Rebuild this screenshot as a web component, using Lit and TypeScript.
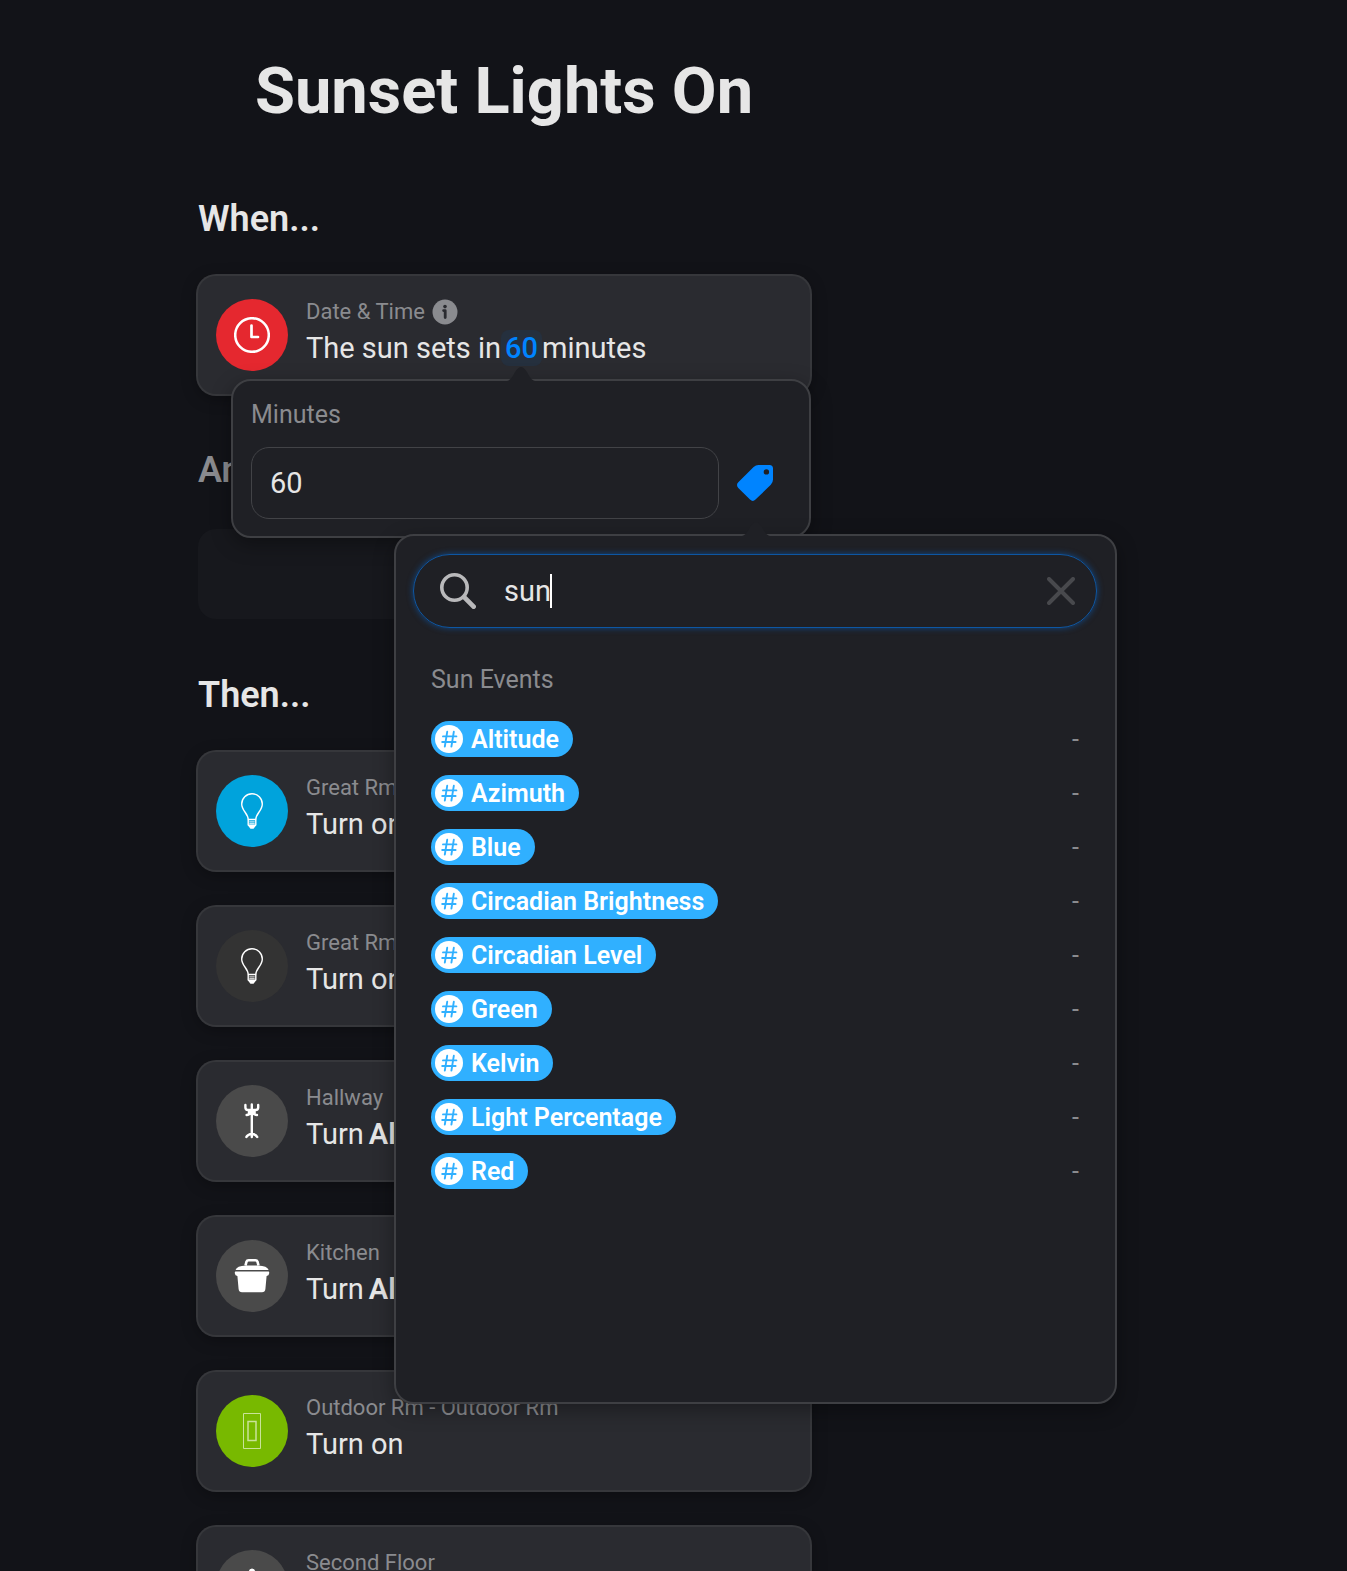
import { LitElement, html, css, svg } from "lit";
import { customElement, property } from "lit/decorators.js";

const icons: Record<string, unknown> = {
  clock: svg`<svg viewBox="0 0 36 36" fill="none" stroke="#fff" stroke-linecap="round" stroke-linejoin="round"><circle cx="18" cy="18" r="16.8" stroke-width="2.5"/><path d="M17.5 8.5V20H24" stroke-width="2.7"/></svg>`,
  bulb: svg`<svg viewBox="0 0 36 36" fill="none" stroke="#fff" stroke-width="1.4" stroke-linejoin="round"><path d="M14.2 26.5C14.2 20.5 7.7 17.8 7.7 11A10.3 10.3 0 0 1 28.3 11C28.3 17.8 21.8 20.5 21.8 26.5Z"/><path d="M14.2 26.5V32L16 33.5H20L21.8 32V26.5"/><path d="M15.3 28.8H20.7M15.3 30.6H20.7" stroke-width="1.2" opacity=".75"/><path d="M15 32.3H21L19.4 35H16.6Z" fill="#fff"/></svg>`,
  rack: svg`<svg viewBox="0 0 36 36" fill="none" stroke="#fff" stroke-width="2.4" stroke-linecap="round" stroke-linejoin="round"><path d="M17.8 1.5V34M11.4 2V4.6Q11.4 7 14 7H21.6Q24.2 7 24.2 4.6V2M12.6 12Q15.5 12 17.8 9Q20 12 23 12M15 8.5H20.6V10.5H15ZM12.4 34Q13.2 32 17.8 30.5Q22.4 32 23.2 34"/></svg>`,
  pot: svg`<svg viewBox="0 0 36 36" fill="#fff"><path d="M11.5 7.5 12.5 3.7Q13 2.2 14.6 2.2H21.4Q23 2.2 23.5 3.7L24.5 7.5" fill="none" stroke="#fff" stroke-width="2.6"/><path d="M1.6 12Q2.6 8 12 7.6H24Q33.4 8 34.6 12Z"/><path d="M1.5 13.6H34.5Q35.4 13.8 35.2 15.2Q35 17.6 32.6 18L31.4 31Q31 34.3 28 34.3H8Q5 34.3 4.6 31L3.4 18Q1 17.6.8 15.2Q.6 13.8 1.5 13.6Z"/></svg>`,
  outlet: svg`<svg viewBox="0 0 36 36" fill="none" stroke="#fff" opacity=".6"><path d="M9.5.5H26.5V35.5H9.5Z"/><path d="M14 8.5H22V27.5H14Z" stroke-width="1.5"/></svg>`,
  home: svg`<svg viewBox="0 0 36 36" fill="#fff"><path d="M18 .5a3.3 3.3 0 0 1 3.2 3L34 16H29V35H7V16H2L14.8 3.5A3.3 3.3 0 0 1 18 .5Z"/></svg>`,
  info: svg`<svg viewBox="0 0 26 26"><circle cx="13" cy="13" r="12.5" fill="#8a8b8f"/><circle cx="13" cy="7.6" r="1.8" fill="#2a2b30"/><path d="M11.6 11.6H13.2V18.6" stroke="#2a2b30" stroke-width="2.8" stroke-linecap="round" stroke-linejoin="round" fill="none"/></svg>`,
  tag: svg`<svg viewBox="0 0 36 36"><path fill="#0084ff" fill-rule="evenodd" d="M21.5 0H32.5Q36 0 36 3.5V14.5Q36 17.5 33.8 19.8L18.5 34.6Q15.8 37.3 13 34.6L1.3 22.9Q-1.3 20 1.3 17.3L16.6 2.1Q18.8 0 21.5 0ZM29.4 4.2A2.7 2.7 0 1 0 29.4 9.6A2.7 2.7 0 1 0 29.4 4.2Z"/></svg>`,
  search: svg`<svg viewBox="0 0 36 36" fill="none" stroke="#b9b9bb" stroke-linecap="round"><circle cx="14.5" cy="14.5" r="12.7" stroke-width="3.6"/><path d="M24.4 24.4 33.6 33.6" stroke-width="4.8"/></svg>`,
  close: svg`<svg viewBox="0 0 28 28" fill="none" stroke="#48494d" stroke-width="4" stroke-linecap="round"><path d="M2 2 26 26M26 2 2 26"/></svg>`,
  hash: svg`<svg viewBox="0 0 28 28" fill="none" stroke="#30b0ff" stroke-width="1.9" stroke-linecap="round"><path d="M12.2 6.8 9.8 21.6M18.8 6.8 16.4 21.6M8 11.4H21.4M7.2 17H20.6"/></svg>`,
  arrow: svg`<svg viewBox="0 0 28 14" fill="#1f2025"><path d="M0 14C4 13 5.5 9.5 8 5Q11.5 0 14 0T20 5C22.5 9.5 24 13 28 14Z"/></svg>`,
};

const variables = [
  "Altitude", "Azimuth", "Blue", "Circadian Brightness", "Circadian Level",
  "Green", "Kelvin", "Light Percentage", "Red",
];

const actions = [
  { icon: "bulb", tone: "blue", place: "Great Rm", text: "Turn on", target: "" },
  { icon: "bulb", tone: "dark", place: "Great Rm", text: "Turn on", target: "" },
  { icon: "rack", tone: "gray", place: "Hallway", text: "Turn", target: "All" },
  { icon: "pot", tone: "gray", place: "Kitchen", text: "Turn", target: "All" },
  { icon: "outlet", tone: "green", place: "Outdoor Rm - Outdoor Rm", text: "Turn on", target: "" },
  { icon: "home", tone: "gray", place: "Second Floor", text: "", target: "" },
];

@customElement("flow-card")
export class FlowCard extends LitElement {
  @property() icon = "";
  @property() tone = "gray";
  @property() place = "";
  @property({ type: Boolean }) info = false;

  static styles = css`
    :host {
      position: relative;
      display: flex;
      align-items: flex-start;
      gap: 18px;
      box-sizing: border-box;
      min-height: 118px;
      padding: 23px 18px;
      border-radius: 18px;
      background: #2a2b30;
      box-shadow: 0 0 0 2px #36373b, 0 4px 16px rgba(0, 0, 0, 0.35);
    }
    svg { display: block; width: 100%; height: 100%; }
    .badge {
      flex: none;
      box-sizing: border-box;
      width: 72px;
      height: 72px;
      padding: 18px;
      border-radius: 50%;
    }
    .red { background: #e5282f; }
    .blue { background: #00a3dc; }
    .dark { background: #333333; }
    .gray { background: #4a4a4a; }
    .green { background: #78b900; }
    .place {
      display: flex;
      align-items: center;
      gap: 7px;
      height: 26px;
      font-size: 22px;
      line-height: 26px;
      color: #8a8b8f;
      white-space: nowrap;
    }
    .info { width: 26px; height: 26px; padding: 0; border: 0; background: none; }
    .text {
      padding-top: 5px;
      font-size: 29px;
      line-height: 36px;
      color: #e6e6e6;
      white-space: nowrap;
    }
  `;

  render() {
    return html`
      <div class="badge ${this.tone}">${icons[this.icon]}</div>
      <div>
        <div class="place">
          <span>${this.place}</span>
          ${this.info ? html`<button class="info" aria-label="Info">${icons.info}</button>` : ""}
        </div>
        <div class="text"><slot></slot></div>
      </div>
      <slot name="overlay"></slot>
    `;
  }
}

@customElement("app-root")
export class AppRoot extends LitElement {
  static styles = css`
    :host {
      display: block;
      height: 100vh;
      overflow: hidden;
      background: #121318;
      color: #e6e6e6;
      font-family: Roboto, sans-serif;
    }
    svg { display: block; width: 100%; height: 100%; }
    button { padding: 0; border: 0; background: none; font: inherit; cursor: pointer; }
    input {
      min-width: 0;
      border: 0;
      outline: 0;
      background: none;
      font: inherit;
      font-size: 29px;
      color: #e6e6e6;
    }
    .page {
      max-width: 612px;
      margin-left: 198px;
    }
    h1 {
      margin: 0;
      padding: 53px 0 71px;
      font-size: 65px;
      line-height: 76px;
      font-weight: 700;
      text-align: center;
    }
    h2 { margin: 0; font-size: 36px; line-height: 38px; font-weight: 600; }
    .muted { color: #8a8b8f; }
    .when { margin: 38px 0 57px; z-index: 1; }
    .empty { height: 90px; margin: 40px 0 57px; border-radius: 18px; background: #17181d; }
    .list { display: flex; flex-direction: column; gap: 37px; padding-top: 38px; }
    .value {
      height: 36px;
      padding: 0 4px;
      border-radius: 8px;
      background: #25303e;
      font-size: 29px;
      line-height: 36px;
      font-weight: 500;
      color: #0084ff;
    }
    .target { margin-left: 5px; font-weight: 600; }
    .pop {
      position: absolute;
      box-sizing: border-box;
      border: 2px solid #3e3f43;
      border-radius: 20px;
      background: #1f2025;
      box-shadow: 0 6px 20px rgba(0, 0, 0, 0.35);
    }
    .arrow { position: absolute; top: -14px; width: 28px; height: 14px; }
    .minutes { left: 33px; top: 103px; width: 580px; padding: 19px 36px 17px 18px; }
    .minutes > .arrow { left: 274px; }
    .label { display: block; font-size: 25px; line-height: 30px; color: #8a8b8f; }
    .row { display: flex; align-items: center; gap: 18px; margin-top: 17px; }
    .number {
      flex: 1;
      box-sizing: border-box;
      height: 72px;
      padding: 0 18px;
      border: 1px solid #424347;
      border-radius: 18px;
    }
    .tag { flex: none; width: 36px; height: 36px; }
    .picker { left: 161px; top: 153px; width: 723px; height: 870px; padding: 18px 18px 18px 17px; }
    .picker > .arrow { left: 346px; }
    .search {
      display: flex;
      align-items: center;
      box-sizing: border-box;
      height: 74px;
      padding: 0 21px 0 26px;
      border: 1px solid #0d57a4;
      border-radius: 37px;
      box-shadow: 0 0 6px rgba(10, 100, 200, 0.6);
    }
    .glass { flex: none; width: 36px; height: 36px; margin-right: 28px; }
    .field { position: relative; flex: 1; display: flex; align-items: center; }
    .field input { width: 100%; padding: 0; }
    .caret { position: absolute; left: 46px; width: 2px; height: 34px; background: #fff; }
    .clear { flex: none; width: 28px; height: 28px; }
    .results { padding: 37px 18px 0; }
    .results h3 { margin: 0; font-size: 25px; line-height: 30px; font-weight: 400; color: #8a8b8f; }
    ul { display: flex; flex-direction: column; gap: 18px; margin: 26px 0 0; padding: 0; list-style: none; }
    li { display: flex; justify-content: space-between; align-items: center; height: 36px; color: #8a8b8f; font-size: 25px; line-height: 38px; }
    .pill {
      display: flex;
      align-items: center;
      gap: 8px;
      height: 36px;
      padding: 0 14px 0 4px;
      border-radius: 18px;
      background: #30b0ff;
      font-size: 25px;
      line-height: 36px;
      font-weight: 600;
      color: #fff;
    }
    .name { padding-top: 2px; }
    .dash { padding-top: 2px; }
    .hash { width: 28px; height: 28px; border-radius: 50%; background: #fff; }
  `;

  render() {
    return html`
      <main class="page">
        <h1>Sunset Lights On</h1>
        <h2>When...</h2>
        <flow-card class="when" icon="clock" tone="red" place="Date &amp; Time" info>
          The sun sets in<button class="value">60</button>minutes
          <div slot="overlay" class="pop minutes">
            <span class="arrow">${icons.arrow}</span>
            <label class="label" for="minutes">Minutes</label>
            <div class="row">
              <input id="minutes" class="number" type="text" inputmode="numeric" .value=${"60"} />
              <button class="tag" aria-label="Insert tag">${icons.tag}</button>
            </div>
            <section class="pop picker">
              <span class="arrow">${icons.arrow}</span>
              <div class="search">
                <span class="glass">${icons.search}</span>
                <div class="field">
                  <input type="text" aria-label="Search" .value=${"sun"} />
                  <span class="caret"></span>
                </div>
                <button class="clear" aria-label="Clear">${icons.close}</button>
              </div>
              <div class="results">
                <h3>Sun Events</h3>
                <ul>
                  ${variables.map((name) => html`
                    <li>
                      <button class="pill"><span class="hash">${icons.hash}</span><span class="name">${name}</span></button>
                      <span class="dash">-</span>
                    </li>`)}
                </ul>
              </div>
            </section>
          </div>
        </flow-card>
        <h2 class="muted">And...</h2>
        <div class="empty"></div>
        <h2>Then...</h2>
        <div class="list">
          ${actions.map((a) => html`
            <flow-card icon=${a.icon} tone=${a.tone} place=${a.place}>${a.text}${a.target ? html`<span class="target">${a.target}</span>` : ""}</flow-card>`)}
        </div>
      </main>
    `;
  }
}
